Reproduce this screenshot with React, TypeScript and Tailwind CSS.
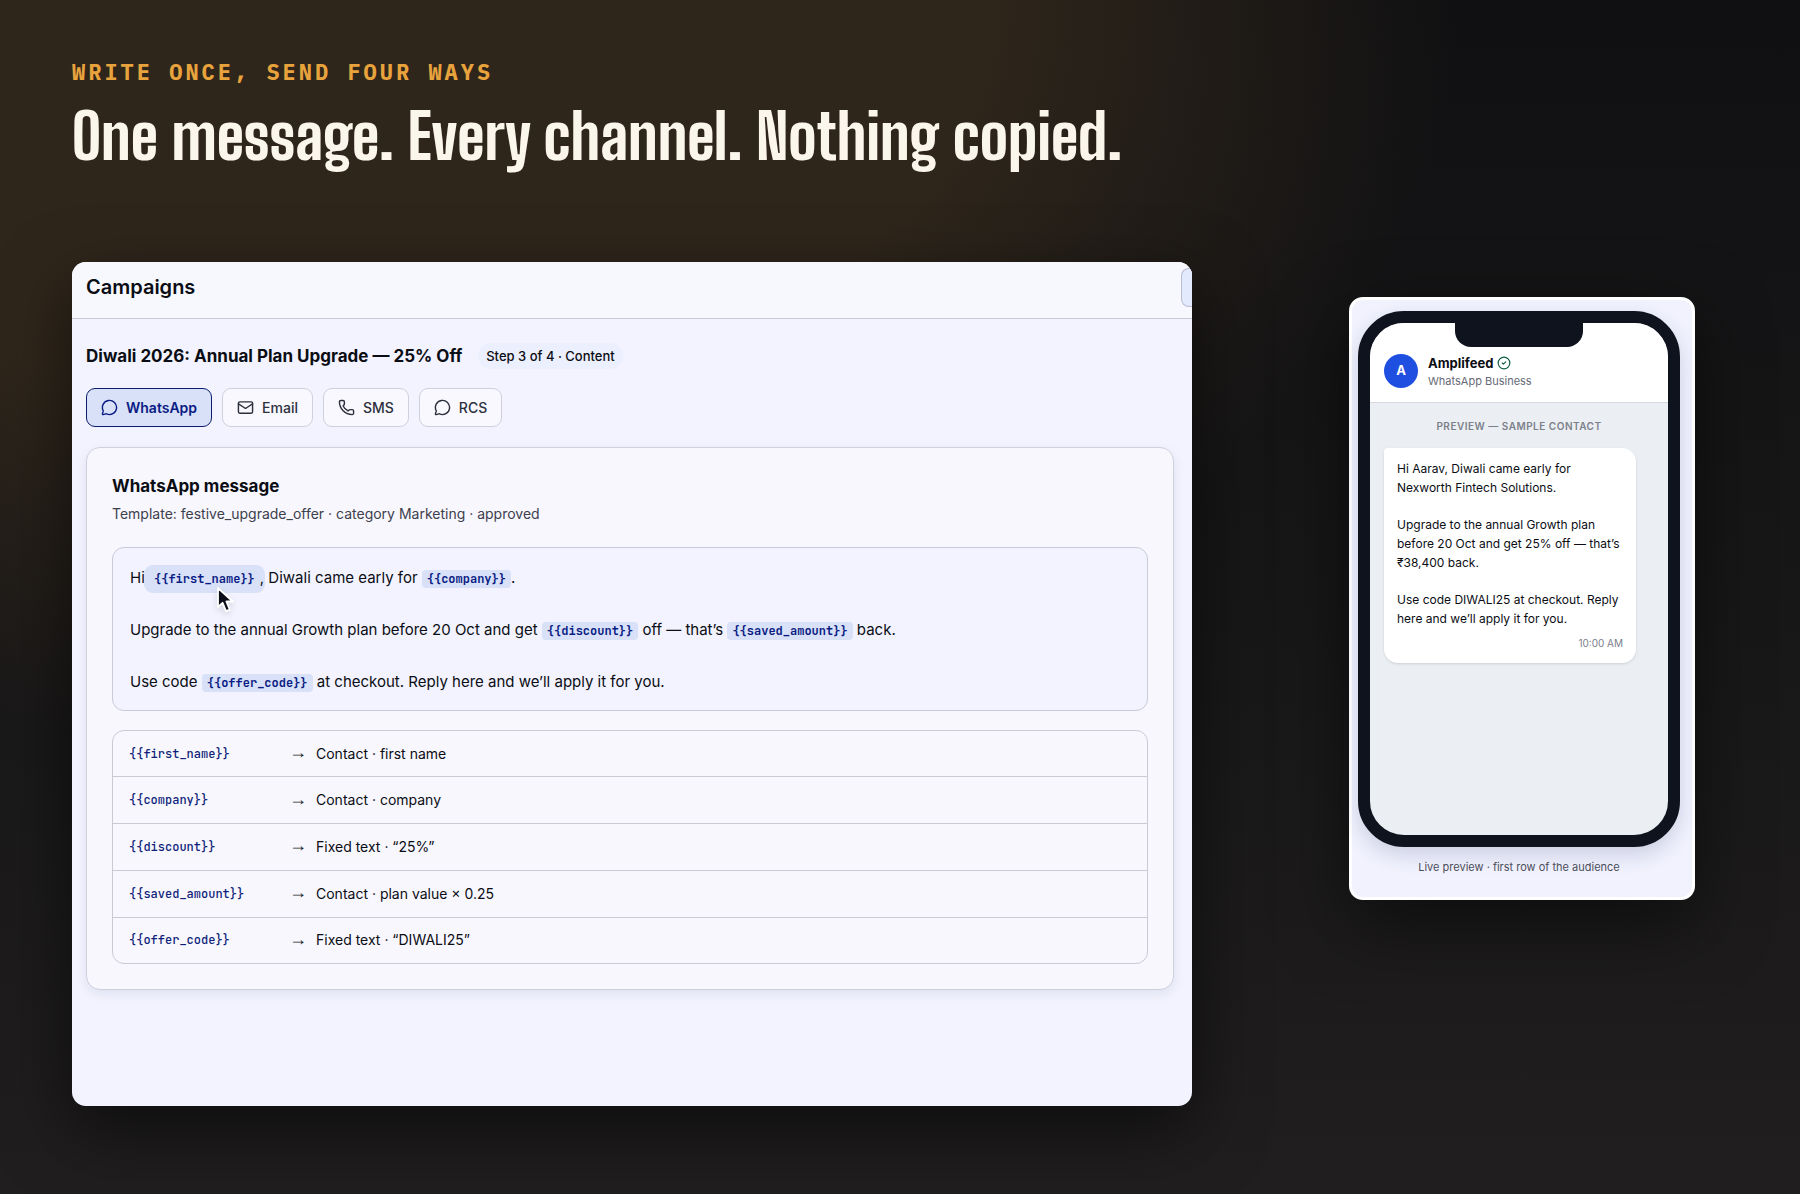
import { CircleCheck, Mail, MessageCircle, Phone } from "lucide-react";
import type { ReactNode } from "react";

const channels = [
  { id: "whatsapp", label: "WhatsApp", icon: MessageCircle },
  { id: "email", label: "Email", icon: Mail },
  { id: "sms", label: "SMS", icon: Phone },
  { id: "rcs", label: "RCS", icon: MessageCircle },
];

const mappings = [
  { token: "{{first_name}}", value: "Contact · first name" },
  { token: "{{company}}", value: "Contact · company" },
  { token: "{{discount}}", value: "Fixed text · “25%”" },
  { token: "{{saved_amount}}", value: "Contact · plan value × 0.25" },
  { token: "{{offer_code}}", value: "Fixed text · “DIWALI25”" },
];

function Token({ children, active }: { children: ReactNode; active?: boolean }) {
  return (
    <code
      className={`inline-block rounded px-[5px] font-['JetBrains_Mono','DejaVu_Sans_Mono',monospace] text-xs leading-[18px] font-semibold text-[#0a1c84] bg-[#d9e1f8] ${
        active ? "ring-[5px] ring-[#d9e1f8]" : ""
      }`}
    >
      {children}
    </code>
  );
}

function Cursor() {
  return (
    <svg viewBox="0 0 20 28" className="absolute left-[67px] top-[21px] w-5 h-7 drop-shadow-md" aria-hidden="true">
      <path d="M2 2v19l4.6-4.2 3.4 8.4 3.8-1.6-3.4-8.1h6.4z" fill="#0c0f1a" stroke="#fff" strokeWidth="1.8" strokeLinejoin="round" />
    </svg>
  );
}

function CampaignEditor() {
  return (
    <section className="flex-[1120] min-w-0 min-h-[844px] rounded-[14px] overflow-hidden bg-[#f2f3fe] shadow-[0_24px_70px_rgba(0,0,0,0.55)]">
      <header className="flex items-center justify-between h-[57px] pl-[14px] pb-1.5 border-b border-[#c9cad6] bg-[#f7f7fe]">
        <h2 className="text-xl font-semibold">Campaigns</h2>
        <button
          type="button"
          aria-label="Open menu"
          className="w-[11px] h-[39px] rounded-l-lg border border-r-0 border-[#b9bdd2] bg-[#e4eafe]"
        />
      </header>

      <div className="pl-[14px] pr-[18px] pt-6">
        <div className="flex items-center gap-4">
          <h3 className="text-[17px] leading-[26px] font-bold">Diwali 2026: Annual Plan Upgrade — 25% Off</h3>
          <span className="rounded-full bg-[#ebeffe] px-2 text-[13px] leading-[26px] font-medium">Step 3 of 4 · Content</span>
        </div>

        <div className="mt-[19px] flex gap-[10px]">
          {channels.map(({ id, label, icon: Icon }) => (
            <button
              key={id}
              type="button"
              className={`flex items-center gap-2 h-[39px] px-[14px] rounded-[9px] border text-sm ${
                id === "whatsapp"
                  ? "font-semibold border-[#0b1d6b] bg-[#d9e1f8] text-[#0a1c84]"
                  : "font-medium border-[#cfd0dc] bg-[#f8f8fe] text-[#2d303c]"
              }`}
            >
              <Icon size={17} strokeWidth={2} />
              {label}
            </button>
          ))}
        </div>

        <div className="mt-5 rounded-[14px] border border-[#cfd0dc] bg-[#f7f7fd] px-[25px] py-[25px] shadow-[0_4px_12px_rgba(20,30,80,0.08)]">
          <h4 className="text-[17px] leading-[26px] font-bold">WhatsApp message</h4>
          <p className="mt-[5px] text-sm leading-5 text-[#3d404d]">
            Template: festive_upgrade_offer · category Marketing · approved
          </p>

          <div className="mt-[23px] rounded-xl border border-[#c9cad8] bg-[#f2f3fe] px-[17px] pt-[17px] pb-[15px] space-y-[26px] text-[15px] leading-[26px]">
            <p>
              Hi{" "}
              <span className="relative inline-block">
                <Token active>{"{{first_name}}"}</Token>
                <Cursor />
              </span>
              <span className="relative">,</span> Diwali came early for <Token>{"{{company}}"}</Token>.
            </p>
            <p>
              Upgrade to the annual Growth plan before 20 Oct and get <Token>{"{{discount}}"}</Token> off — that’s{" "}
              <Token>{"{{saved_amount}}"}</Token> back.
            </p>
            <p>
              Use code <Token>{"{{offer_code}}"}</Token> at checkout. Reply here and we’ll apply it for you.
            </p>
          </div>

          <div className="mt-[19px] rounded-xl border border-[#c9cad4] overflow-hidden">
            <table className="w-full h-[232px] text-sm">
              <tbody className="divide-y divide-[#c9cad4]">
                {mappings.map(({ token, value }) => (
                  <tr key={token}>
                    <td className="w-[176px] pl-4 font-['JetBrains_Mono','DejaVu_Sans_Mono',monospace] text-xs font-medium text-[#0f1f7a]">
                      {token}
                    </td>
                    <td className="w-[27px] pb-[3px] font-['Liberation_Sans',sans-serif] text-lg leading-none text-[#1c1f2b]">→</td>
                    <td>{value}</td>
                  </tr>
                ))}
              </tbody>
            </table>
          </div>
        </div>
      </div>
    </section>
  );
}

function PhonePreview() {
  return (
    <section className="mt-[35px] w-[346px] shrink-0 rounded-[14px] border-[3px] border-white bg-[#f1f2fe] px-1.5 pt-[11px] pb-[21px] shadow-[0_24px_70px_rgba(0,0,0,0.5)]">
      <div className="w-[322px] h-[536px] rounded-[46px] border-[12px] border-[#0e131d] bg-[#ebeff3] overflow-hidden shadow-[0_8px_20px_rgba(20,30,80,0.16)]">
        <div className="relative bg-white pt-[31px] pb-3 px-[14px] flex items-start gap-[10px] border-b border-[#d6d9e0]">
          <div className="absolute top-0 left-1/2 -translate-x-1/2 w-32 h-6 rounded-b-2xl bg-[#0e131d]" />
          <div className="size-[34px] rounded-full bg-[#1f4fe0] text-white text-[13px] font-bold flex items-center justify-center">
            A
          </div>
          <div>
            <div className="flex items-center gap-1 text-[13px] leading-[18px] font-bold">
              Amplifeed
              <CircleCheck size={14} strokeWidth={2} className="text-[#0f5c40]" />
            </div>
            <div className="text-[11px] leading-[18px] text-[#666a76]">WhatsApp Business</div>
          </div>
        </div>

        <div className="px-[14px] pt-[15px]">
          <p className="text-center text-[10px] leading-4 font-semibold tracking-wider text-[#7c808b]">
            PREVIEW — SAMPLE CONTACT
          </p>
          <div className="mt-[14px] w-[252px] rounded-[14px] rounded-tl bg-white px-[13px] pt-[11px] pb-3 shadow-sm">
            <div className="space-y-[18px] text-xs leading-[19px]">
              <p>Hi Aarav, Diwali came early for Nexworth Fintech Solutions.</p>
              <p>Upgrade to the annual Growth plan before 20 Oct and get 25% off — that’s ₹38,400 back.</p>
              <p>Use code DIWALI25 at checkout. Reply here and we’ll apply it for you.</p>
            </div>
            <p className="mt-[7px] text-right text-[10px] leading-4 text-[#7c808b]">10:00 AM</p>
          </div>
        </div>
      </div>
      <p className="mt-[11px] w-[322px] text-center text-[11px] leading-[18px] text-[#4b4e5a]">
        Live preview · first row of the audience
      </p>
    </section>
  );
}

export default function App() {
  return (
    <main className="min-h-screen bg-[radial-gradient(1100px_760px_at_20%_0%,#2f261b_0%,#2f261b_56%,transparent_100%),linear-gradient(180deg,#101012,#201e1e)] px-[72px] pt-[58px] pb-[88px] font-['Inter','Liberation_Sans',sans-serif] text-[#0b0d14]">
      <p className="font-['IBM_Plex_Mono','JetBrains_Mono','DejaVu_Sans_Mono',monospace] text-[22px] leading-7 font-bold tracking-[3px] text-[#e8a33d]">
        WRITE ONCE, SEND FOUR WAYS
      </p>
      <h1 className="mt-[14px] text-[63px] leading-[72px] font-extrabold text-[#fbf6ec] font-['Big_Shoulders_Display','Roboto_Condensed',sans-serif]">
        One message. Every channel. Nothing copied.
      </h1>
      <div className="mt-[90px] flex items-start">
        <CampaignEditor />
        <div className="flex-[503] flex justify-end pr-[33px]">
          <PhonePreview />
        </div>
      </div>
    </main>
  );
}
